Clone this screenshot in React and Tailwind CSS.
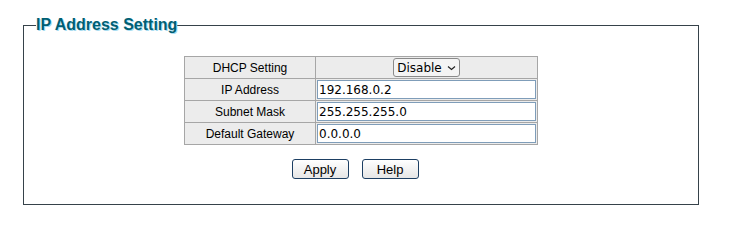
import React from "react";

const rows = [
  { label: "IP Address", value: "192.168.0.2" },
  { label: "Subnet Mask", value: "255.255.255.0" },
  { label: "Default Gateway", value: "0.0.0.0" },
];

export default function App() {
  return (
    <div className="w-[749px] h-[241px] bg-white pt-[14px] pl-[23px]" style={{ fontFamily: '"Liberation Sans", Arial, sans-serif' }}>
      <fieldset className="w-[676px] h-[191px] border border-[#36424a] pl-[12px]">
        <legend className="text-[16px] font-bold text-[#005f73] leading-[22px] px-0 [text-shadow:1px_1px_0_#a9dcf0]">
          IP Address Setting
        </legend>
        <div className="flex flex-col items-center pt-[20px] pr-[12px]">
          <table className="border-collapse w-[354px] text-[12px] text-black">
            <tbody>
              <tr className="h-[22px]">
                <td className="w-[131px] border border-[#a6a6a6] bg-[#ececec] text-center">DHCP Setting</td>
                <td className="border border-[#a6a6a6] bg-[#ececec] text-center">
                  <span className="inline-flex items-center gap-[5px] h-[19px] px-[3px] border border-[#8a8a8a] rounded-[3px] bg-[#f4f4f4] text-[12px] leading-none" style={{ fontFamily: 'Tahoma, "DejaVu Sans", sans-serif' }}>
                    Disable
                    <svg width="9" height="6" viewBox="0 0 9 6"><path d="M1 1.5 L4.5 4.5 L8 1.5" fill="none" stroke="#222" strokeWidth="1.2" /></svg>
                  </span>
                </td>
              </tr>
              {rows.map((r) => (
                <tr key={r.label} className="h-[22px]">
                  <td className="border border-[#a6a6a6] bg-[#ececec] text-center">{r.label}</td>
                  <td className="border border-[#a6a6a6] bg-[#ececec] p-[1px]">
                    <div className="h-[19px] border border-[#7f9db9] bg-white pl-[1px] flex items-center text-[12px]" style={{ fontFamily: 'Tahoma, "DejaVu Sans", sans-serif' }}>
                      {r.value}
                    </div>
                  </td>
                </tr>
              ))}
            </tbody>
          </table>
          <div className="flex gap-[13px] mt-[14px] mr-[12px]">
            {["Apply", "Help"].map((b) => (
              <button key={b} className="w-[57px] h-[20px] rounded-[3px] border border-[#1d3f63] bg-gradient-to-b from-white to-[#e6e6e6] text-[13px] text-black leading-none">
                {b}
              </button>
            ))}
          </div>
        </div>
      </fieldset>
    </div>
  );
}
